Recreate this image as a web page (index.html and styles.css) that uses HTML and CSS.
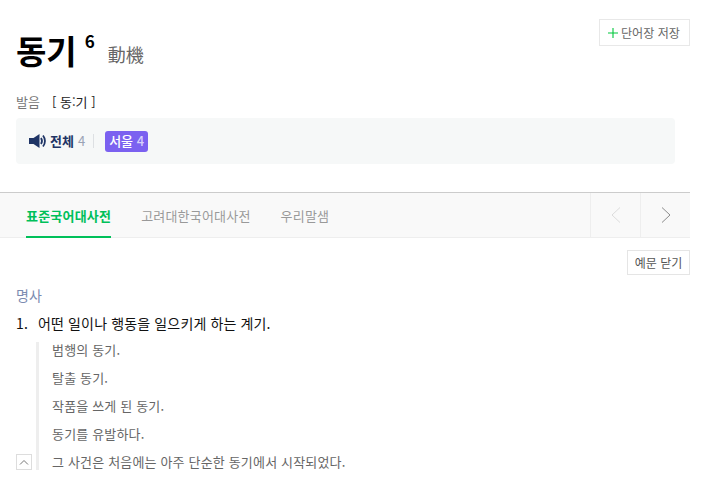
FILE: index.html
```html
<!DOCTYPE html>
<html lang="ko">
<head>
  <meta charset="UTF-8">
  <meta name="viewport" content="width=device-width, initial-scale=1.0">
  <title>동기</title>
  <link rel="stylesheet" href="styles.css">
</head>
<body>
  <div class="page">
    <header class="entry-head">
      <div class="title-row">
        <h1 class="word">동기</h1>
        <span class="word-no">6</span>
        <span class="hanja">動機</span>
      </div>
      <button class="save-btn">
        <svg class="plus" width="10" height="10" viewBox="0 0 10 10"><path d="M5 0v10M0 5h10" stroke="#00c73c" stroke-width="1.1" fill="none"/></svg>
        단어장 저장
      </button>
    </header>

    <div class="pron-row">
      <span class="pron-label">발음</span>
      <span class="pron-text">[ 동:기 ]</span>
    </div>

    <div class="audio-box">
      <svg class="speaker" width="17" height="14" viewBox="0 0 17 14">
        <path d="M0 4h4.5l6-4v14l-6-4H0z" fill="#1f3566"/>
        <path d="M12 4c1.2 1.8 1.2 4.2 0 6" stroke="#1f3566" stroke-width="1.8" fill="none"/>
        <path d="M14 1.5c2.6 3.2 2.6 7.8 0 11" stroke="#1f3566" stroke-width="1.8" fill="none"/>
      </svg>
      <span class="audio-all">전체</span>
      <span class="audio-count">4</span>
      <span class="audio-sep"></span>
      <span class="audio-tag">서울 <em>4</em></span>
    </div>

    <nav class="tabs">
      <a class="tab tab-on">표준국어대사전</a>
      <a class="tab">고려대한국어대사전</a>
      <a class="tab">우리말샘</a>
      <div class="tab-arrows">
        <span class="arrow">
          <svg width="10" height="16" viewBox="0 0 10 16"><path d="M9 .5 1 8l8 7.5" stroke="#dcdcdc" fill="none"/></svg>
        </span>
        <span class="arrow">
          <svg width="10" height="16" viewBox="0 0 10 16"><path d="M1 .5 9 8l-8 7.5" stroke="#8c8c8c" fill="none"/></svg>
        </span>
      </div>
    </nav>

    <div class="tools">
      <button class="close-btn">예문 닫기</button>
    </div>

    <section class="meaning">
      <div class="pos">명사</div>
      <p class="def"><span class="def-no">1.</span>어떤 일이나 행동을 일으키게 하는 계기.</p>
      <div class="examples-wrap">
        <button class="fold-btn" aria-label="접기">
          <svg width="10" height="6" viewBox="0 0 10 6"><path d="M1 5.5 5 1.5l4 4" stroke="#777" fill="none"/></svg>
        </button>
        <ul class="examples">
          <li>범행의 동기.</li>
          <li>탈출 동기.</li>
          <li>작품을 쓰게 된 동기.</li>
          <li>동기를 유발하다.</li>
          <li>그 사건은 처음에는 아주 단순한 동기에서 시작되었다.</li>
        </ul>
      </div>
    </section>
  </div>
</body>
</html>
```

FILE: styles.css
```css
html, body {
  height: 100%;
}
body {
  margin: 0;
  background: #fff;
  font-family: "Noto Sans CJK KR", "Liberation Sans", sans-serif;
  color: #000;
  overflow: hidden;
}
button {
  font-family: inherit;
  background: #fff;
  cursor: pointer;
}
.page {
  width: 690px;
}
.entry-head {
  display: flex;
  justify-content: space-between;
  align-items: flex-start;
  padding: 19px 0 0 16px;
  height: 84px;
  box-sizing: border-box;
}
.title-row {
  display: flex;
  align-items: flex-start;
  margin-top: 7px;
}
.word {
  margin: 0;
  font-size: 33px;
  line-height: 48px;
  font-weight: 700;
}
.word-no {
  font-size: 17px;
  font-weight: 700;
  line-height: 24px;
  margin: 3px 0 0 8px;
}
.hanja {
  font-size: 18px;
  line-height: 26px;
  color: #666;
  margin: 15px 0 0 13px;
}
.save-btn {
  display: flex;
  align-items: center;
  gap: 3px;
  height: 27px;
  padding: 0 9px 0 8px;
  border: 1px solid #e8e8e8;
  font-size: 12.1px;
  color: #666;
}
.pron-row {
  display: flex;
  gap: 12px;
  padding: 0 16px;
  height: 34px;
  align-items: center;
  font-size: 13px;
}
.pron-label {
  color: #777;
}
.pron-text {
  color: #222;
}
.audio-box {
  display: flex;
  align-items: center;
  height: 46px;
  margin: 0 15px 0 16px;
  padding-left: 13px;
  background: #f6f8f8;
  border-radius: 4px;
  font-size: 13px;
  line-height: 20px;
}
.speaker {
  margin-right: 4px;
}
.audio-all {
  font-weight: 700;
  color: #1f3566;
}
.audio-count {
  color: #9aa3b5;
  margin-left: 4px;
}
.audio-sep {
  width: 1px;
  height: 14px;
  background: #dde0e3;
  margin: 0 11px 0 8px;
}
.audio-tag {
  background: #7b61f0;
  color: #fff;
  border-radius: 3px;
  padding: 0 4px;
  height: 21px;
  line-height: 20px;
  font-weight: 500;
}
.audio-tag em {
  font-style: normal;
  color: #d6d0fb;
}
.tabs {
  display: flex;
  align-items: stretch;
  height: 46px;
  box-sizing: border-box;
  margin-top: 28px;
  padding-left: 26px;
  gap: 30px;
  background: #f9f9f9;
  border-top: 1px solid #ccc;
  border-bottom: 1px solid #eee;
  font-size: 13px;
  letter-spacing: 0.2px;
}
.tab {
  line-height: 45px;
  color: #999;
}
.tab-on {
  color: #00c05a;
  font-weight: 700;
  height: 45px;
  box-sizing: border-box;
  border-bottom: 2px solid #00c05a;
}
.tab-arrows {
  display: flex;
  margin-left: auto;
}
.arrow {
  display: flex;
  align-items: center;
  justify-content: center;
  width: 49px;
  border-left: 1px solid #eee;
}
.tools {
  display: flex;
  justify-content: flex-end;
  margin-top: 12px;
}
.close-btn {
  height: 25px;
  width: 63px;
  padding: 0;
  border: 1px solid #e5e5e5;
  font-size: 12px;
  color: #555;
}
.meaning {
  padding: 0 16px;
}
.pos {
  font-size: 14px;
  line-height: 20px;
  color: #7b8bb0;
  margin-top: 10px;
}
.def {
  margin: 8px 0 0;
  font-size: 14px;
  line-height: 20px;
  color: #111;
  letter-spacing: 0.14px;
}
.def-no {
  display: inline-block;
  width: 22px;
}
.examples-wrap {
  position: relative;
  padding-left: 20px;
  margin-top: 9px;
}
.fold-btn {
  position: absolute;
  left: 0;
  bottom: 0;
  width: 16px;
  height: 16px;
  padding: 0;
  border: 1px solid #ddd;
  display: flex;
  align-items: center;
  justify-content: center;
}
.examples {
  list-style: none;
  margin: 0;
  padding: 0 0 0 13px;
  border-left: 3px solid #eee;
  font-size: 13px;
  color: #666;
  letter-spacing: 0.17px;
}
.examples li {
  line-height: 16px;
}
.examples li + li {
  margin-top: 12px;
}
```
